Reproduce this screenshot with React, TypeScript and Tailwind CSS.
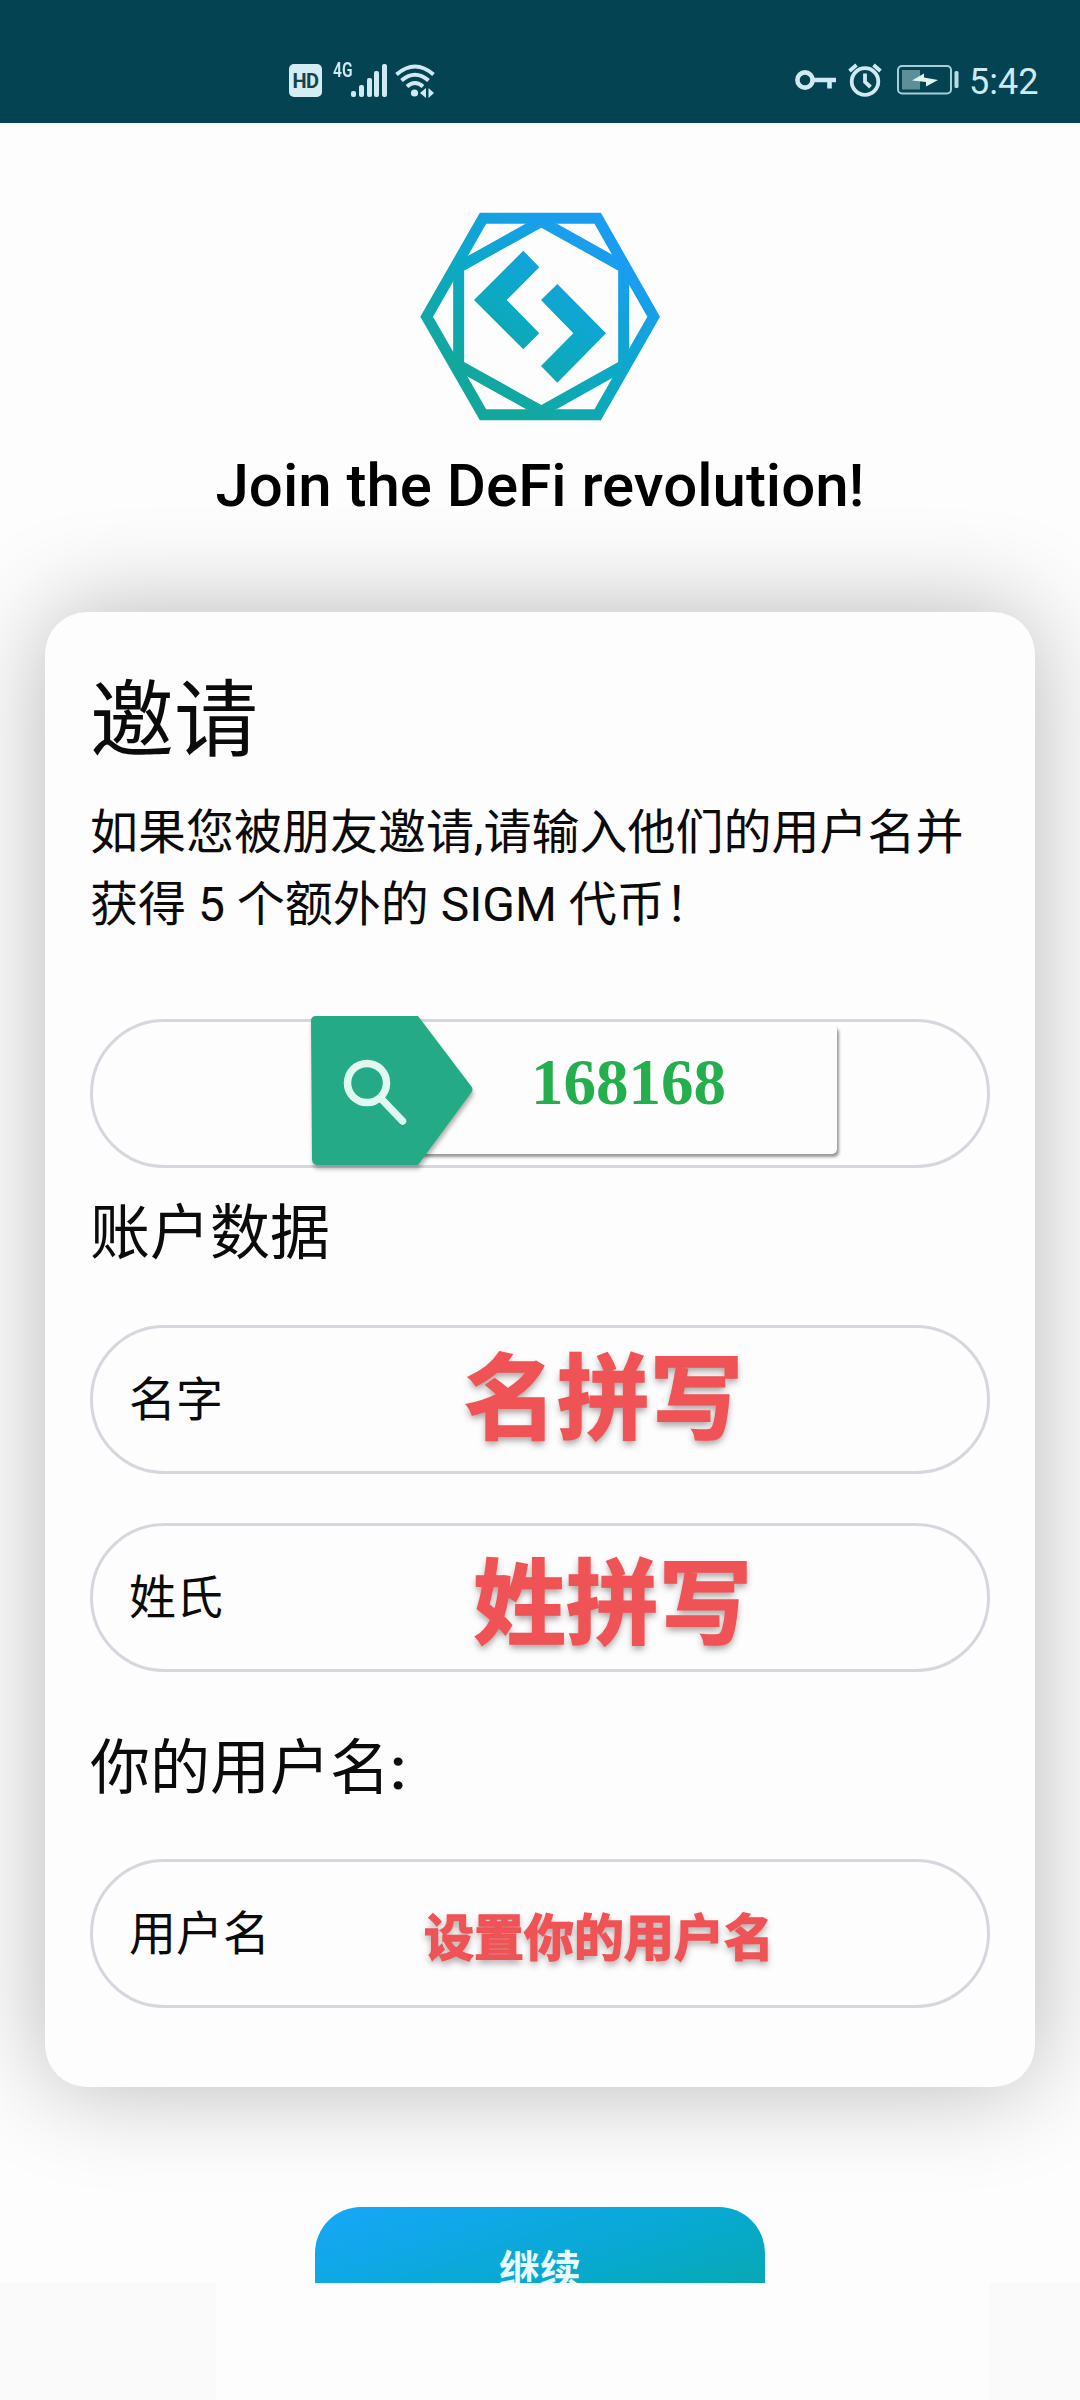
import type { ReactNode } from "react";

const BARS = [6, 12, 19, 26, 33];

function StatusBar() {
  return (
    <header className="flex h-[123px] items-start bg-[#034352] pt-[63px] text-[#cfeaf3]">
      <span className="ml-[289px] mt-[1px] flex h-[33px] w-[33px] items-center justify-center rounded-[5px] bg-[#d5ecf3] text-[20px] font-bold leading-none tracking-tight text-[#12434f]">
        HD
      </span>
      <span className="ml-[11px] w-[18px] text-[21px] font-semibold leading-[15px]">
        <span className="inline-block origin-left scale-x-[0.74]">4G</span>
      </span>
      <div className="flex h-[34px] w-[36px] items-end justify-between">
        {BARS.map((h) => (
          <span key={h} className="w-[5px] rounded-[2px] bg-[#cfeaf3]" style={{ height: h }} />
        ))}
      </div>
      <svg className="ml-[8px] mt-[1px]" width="41" height="34" viewBox="0 0 41 34" fill="none" stroke="currentColor" strokeWidth="4">
        <path d="M1.500 10.500Q20 -5.500 38.500 10.500" />
        <path d="M6.500 16.500Q20 5 33.500 16.500" />
        <path d="M12 22.500Q20 15.500 28 22.500" />
        <circle cx="19.500" cy="29" r="3.600" fill="currentColor" stroke="none" />
        <path d="M25 29l6-5v10zM33.500 24l5.500 5-5.500 5z" fill="currentColor" stroke="none" />
      </svg>
      <svg className="ml-[359px] mt-[7px]" width="42" height="21" viewBox="0 0 42 21" fill="none" stroke="currentColor" strokeWidth="4.600">
        <circle cx="10" cy="10" r="7.600" />
        <path d="M18 10h23M34.500 10v8.500" />
      </svg>
      <svg className="ml-[11px]" width="35" height="34" viewBox="0 0 35 34" fill="none" stroke="currentColor" strokeWidth="3.800">
        <circle cx="17" cy="18.500" r="13.300" />
        <path d="M17 10.500v8.500l5.500 5" />
        <path d="M1.500 8l7-6M32.500 8l-7-6" />
      </svg>
      <svg className="ml-[14px] mt-[2px]" width="63" height="30" viewBox="0 0 63 30">
        <rect x="1" y="1" width="53" height="27.500" rx="4" fill="none" stroke="#a9cfd6" strokeWidth="2" />
        <rect x="5" y="5" width="18" height="19.500" fill="#5e8f98" />
        <path d="M15 15.500L27 8.500V12.500L41 15 29 21.500V17z" fill="#e2f3ee" />
        <rect x="57.500" y="6" width="4" height="17" rx="1.500" fill="#b9dbe3" />
      </svg>
      <span className="ml-[9px] text-[36px] leading-[38px]">5:42</span>
    </header>
  );
}

function Logo() {
  return (
    <svg className="mx-auto mt-[67px] block" width="280" height="250" viewBox="0 0 840 750">
      <defs>
        <linearGradient id="sigm" gradientUnits="userSpaceOnUse" x1="300" y1="640" x2="620" y2="200">
          <stop offset="0" stopColor="#12a79c" />
          <stop offset="0.500" stopColor="#0ba9c6" />
          <stop offset="1" stopColor="#1a9df0" />
        </linearGradient>
      </defs>
      <g fill="none" stroke="url(#sigm)" strokeWidth="33">
        <path d="M80 380L249 85H593L761 380 593 674H249Z" />
        <path d="M424 94L671 232V526L424 664 176 526V232Z" />
      </g>
      <path
        d="M370 182L418 232 320 330 418 430 370 478 222 330ZM472 282L618 430 472 578 423 528 520 430 423 330Z"
        fill="url(#sigm)"
      />
    </svg>
  );
}

interface FieldProps {
  label?: string;
  className: string;
  children: ReactNode;
}

function Field({ label, className, children }: FieldProps) {
  return (
    <div
      className={`relative flex h-[149px] w-[900px] shrink-0 items-center rounded-full border-[3px] border-[#d6d6de] pl-[36px] ${className}`}
    >
      <span className="pt-[1px] text-[47px] leading-[60px]">{label}</span>
      {children}
    </div>
  );
}

function InviteCode() {
  return (
    <div className="absolute left-[218px] top-[-7px] h-[156px] w-[540px]">
      <div className="absolute left-[60px] top-[10px] h-[129px] w-[466px] rounded-[5px] bg-[#fdfdfd] shadow-[2px_3px_3px_rgba(0,0,0,0.4)]" />
      <svg className="absolute left-0 top-0 drop-shadow-[1px_4px_2px_rgba(0,0,0,0.3)]" width="164" height="152" viewBox="0 0 164 152" fill="none">
        <path
          d="M5 1H107L160 71Q163 74.500 160 78L107 150H7Q1 150 1 144L0 6Q0 1 5 1Z"
          fill="#24ab85"
        />
        <ellipse cx="56" cy="68" rx="19.500" ry="19.500" stroke="#dff9f0" strokeWidth="7.500" />
        <path d="M70 83.500L91.500 106" stroke="#dff9f0" strokeWidth="7.500" strokeLinecap="round" />
      </svg>
      <span className="absolute left-[220px] top-[31px] font-['Liberation_Serif'] text-[65px] font-bold leading-[72px] text-[#25ae4d]">
        168168
      </span>
    </div>
  );
}

const NOTE =
  "absolute whitespace-nowrap font-bold text-[#ef5355] [-webkit-text-stroke:1.5px_#ef5355] [text-shadow:0_4px_7px_rgba(60,40,40,0.45)]";

export default function App() {
  return (
    <div className="h-[2400px] w-[1080px] overflow-hidden bg-[#fafafa] font-['Roboto','Noto_Sans_CJK_SC',sans-serif] text-[#0b0b0b]">
      <div className="h-[2283px] overflow-hidden bg-[#fdfdfd]">
        <StatusBar />
        <Logo />
        <h1 className="mt-[11px] text-center text-[60px] font-medium leading-[70px] text-black">
          Join the DeFi revolution!
        </h1>

        <section className="mx-auto mt-[91px] flex h-[1475px] w-[990px] flex-col rounded-[42px] bg-[#fdfdfd] px-[45px] pt-[60px] shadow-[0_0_100px_rgba(0,0,0,0.28)]">
          <h2 className="text-[84px] leading-[100px]">邀请</h2>
          <p className="mt-[25px] whitespace-nowrap text-[48px] leading-[72px]">
            如果您被朋友邀请,请输入他们的用户名并
            <br />
            获得 5 个额外的 SIGM 代币！
          </p>
          <Field className="mt-[78px]">
            <InviteCode />
          </Field>
          <h3 className="mt-[31px] text-[60px] leading-[70px]">账户数据</h3>
          <Field label="名字" className="mt-[56px]">
            <span className={`${NOTE} left-[371px] top-[18px] text-[93px] leading-[110px]`}>名拼写</span>
          </Field>
          <Field label="姓氏" className="mt-[49px]">
            <span className={`${NOTE} left-[380px] top-[25px] text-[93px] leading-[110px]`}>姓拼写</span>
          </Field>
          <h3 className="mt-[62px] text-[60px] leading-[70px]">
            你的用户名<span className="font-semibold">:</span>
          </h3>
          <Field label="用户名" className="mt-[55px]">
            <span className={`${NOTE} left-[331px] top-[47px] text-[50px] leading-[60px]`}>
              设置你的用户名
            </span>
          </Field>
        </section>

        <button
          type="button"
          className="mx-auto mt-[120px] block h-[150px] w-[450px] rounded-[46px] bg-linear-to-br from-[#18a6fa] via-[#08a9cf] to-[#10a795] pb-[20px] text-[41px] font-bold text-[#e9fbfd]"
        >
          继续
        </button>
      </div>
      <div className="mx-auto h-[117px] w-[773px] translate-x-[62px] bg-[#fdfdfd]" />
    </div>
  );
}
